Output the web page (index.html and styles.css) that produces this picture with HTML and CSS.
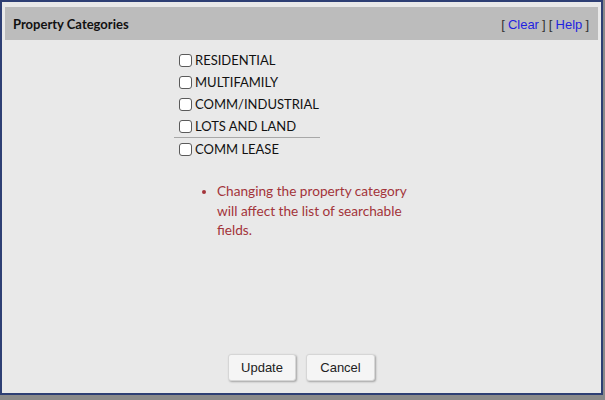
FILE: index.html
```html
<!DOCTYPE html>
<html>
<head>
<meta charset="utf-8">
<link rel="stylesheet" href="styles.css">
</head>
<body>
<div class="dialog">
  <div class="header">
    <span class="title">Property Categories</span>
    <span class="links">[ <a href="#">Clear</a> ] [ <a href="#">Help</a> ]</span>
  </div>
  <div class="content">
    <div class="cats">
      <label class="row"><input type="checkbox"><span>RESIDENTIAL</span></label>
      <label class="row"><input type="checkbox"><span>MULTIFAMILY</span></label>
      <label class="row"><input type="checkbox"><span>COMM/INDUSTRIAL</span></label>
      <label class="row"><input type="checkbox"><span>LOTS AND LAND</span></label>
      <div class="sep"></div>
      <label class="row"><input type="checkbox"><span>COMM LEASE</span></label>
    </div>
    <ul class="note">
      <li>Changing the property category will affect the list of searchable fields.</li>
    </ul>
  </div>
  <div class="buttons">
    <button class="btn btn-update">Update</button>
    <button class="btn btn-cancel">Cancel</button>
  </div>
</div>
</body>
</html>
```

FILE: styles.css
```css
html, body {
  margin: 0;
  padding: 0;
}
body {
  background: #8a8a8a;
  width: 605px;
  height: 400px;
  overflow: hidden;
}
.dialog {
  box-sizing: border-box;
  width: 603px;
  height: 395px;
  border: 2px solid #2e3f74;
  background: #e9e9e9;
  padding: 5px 3px 0 3px;
  display: flex;
  flex-direction: column;
  font-family: Lato, "Liberation Sans", sans-serif;
}
.header {
  height: 33px;
  background: #bcbcbc;
  display: flex;
  align-items: center;
  justify-content: space-between;
  padding: 0 9px 0 8px;
}
.title {
  font-weight: bold;
  font-size: 13px;
  color: #111;
}
.links {
  font-family: "Liberation Sans", Arial, sans-serif;
  font-size: 13px;
  color: #333;
  padding-top: 1px;
  word-spacing: -0.5px;
}
.links a {
  color: #1f1fe0;
  text-decoration: none;
}
.content {
  flex: 1;
  display: flex;
  flex-direction: column;
}
.cats {
  margin: 9px 0 0 169px;
  width: 146px;
  display: flex;
  flex-direction: column;
}
.row {
  height: 22px;
  display: flex;
  align-items: center;
  padding-left: 5px;
  font-size: 13px;
  color: #111;
}
.row input {
  -webkit-appearance: none;
  appearance: none;
  margin: 0 3px 0 0;
  width: 13px;
  height: 13px;
  box-sizing: border-box;
  border: 1px solid #5a5a5a;
  border-radius: 3px;
  background: #fff;
}
.sep {
  height: 1px;
  background: #a8a8a8;
}
.note {
  margin: 22px 0 0 196px;
  padding: 0 0 0 16px;
  width: 196px;
  color: #a3343a;
  font-size: 13.65px;
  line-height: 19.5px;
}
.buttons {
  display: flex;
  justify-content: center;
  gap: 10px;
  margin-bottom: 12px;
}
.btn {
  height: 27px;
  box-sizing: border-box;
  border: 1px solid #d6d6d6;
  border-radius: 3px;
  background: #f5f5f5;
  box-shadow: 1px 1px 2px rgba(0,0,0,0.3);
  font-family: "Liberation Sans", Arial, sans-serif;
  font-size: 13px;
  color: #222;
  padding: 0;
}
.btn-update { width: 68px; }
.btn-cancel { width: 69px; }
```
